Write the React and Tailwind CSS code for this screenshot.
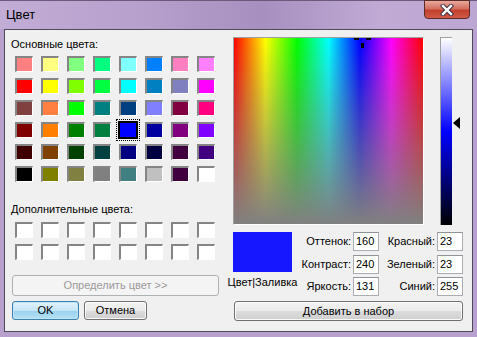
import React from "react";

const basic = [
  ["#FF8080", "#FFFF80", "#80FF80", "#00FF80", "#80FFFF", "#0080FF", "#FF80C0", "#FF80FF"],
  ["#FF0000", "#FFFF00", "#80FF00", "#00FF40", "#00FFFF", "#0080C0", "#8080C0", "#FF00FF"],
  ["#804040", "#FF8040", "#00FF00", "#008080", "#004080", "#8080FF", "#800040", "#FF0080"],
  ["#800000", "#FF8000", "#008000", "#008040", "#0000FF", "#0000A0", "#800080", "#8000FF"],
  ["#400000", "#804000", "#004000", "#004040", "#000080", "#000040", "#400040", "#400080"],
  ["#000000", "#808000", "#808040", "#808080", "#408080", "#C0C0C0", "#400040", "#FFFFFF"],
];

function Swatch({ color, selected }) {
  if (selected) {
    return (
      <div
        className="w-[18px] h-[16px] border border-black ring-1 ring-black outline-1 outline-dotted outline-black outline-offset-[2px]"
        style={{ backgroundColor: color }}
      />
    );
  }
  return (
    <div
      className="w-[18px] h-[16px] border-t-2 border-l-2 border-r border-b border-t-[#858585] border-l-[#858585] border-r-white border-b-white"
      style={{ backgroundColor: color }}
    />
  );
}

function Field({ label, value, labelW }) {
  return (
    <div className="flex items-center h-[19px]">
      <div className="text-right pr-[2px]" style={{ width: labelW }}>{label}</div>
      <div className="w-[26px] h-[19px] bg-white border border-[#abadb3] border-t-[#8e9299] pl-[2px] leading-[17px]">
        {value}
      </div>
    </div>
  );
}

export default function App() {
  return (
    <div className="w-[477px] h-[337px] overflow-hidden bg-[#b9a1cf] text-[11px] text-black font-['Liberation_Sans',Arial,sans-serif]">
      {/* Title bar */}
      <div className="h-[29px] flex items-start bg-[linear-gradient(90deg,#c2add6,#b7a0cc_30%,#a78fbf_55%,#c1abd5_80%,#bca6d2)] border-t border-[#6b5a7c]">
        <div className="pl-[6px] pt-[6px] text-[13px] leading-[15px]">Цвет</div>
        <div className="ml-auto mr-[7px] w-[46px] h-[19px] -mt-px rounded-b-[4px] border border-[#5b2b2b] bg-[linear-gradient(180deg,#e9a99c,#d4705f_45%,#c3402f_55%,#cf5a45)] flex items-center justify-center">
          <svg width="14" height="12" viewBox="0 0 14 12">
            <path d="M3 2 L11 10 M11 2 L3 10" stroke="#3b3048" strokeWidth="4.4" strokeLinecap="square" />
            <path d="M3 2 L11 10 M11 2 L3 10" stroke="#ffffff" strokeWidth="2.4" strokeLinecap="square" />
          </svg>
        </div>
      </div>

      {/* Client area */}
      <div className="mx-[4px] h-[303px] border border-[#4f4a5a] bg-[#f0f0f0] flex">
        {/* Left column */}
        <div className="w-[228px] flex flex-col">
          <div className="ml-[6px] mt-[8px] leading-[13px]">Основные цвета:</div>
          <div className="ml-[10px] mt-[5px] grid grid-cols-[repeat(8,18px)] gap-x-[8px] gap-y-[6px]">
            {basic.map((row, r) =>
              row.map((c, i) => <Swatch key={r + "-" + i} color={c} selected={r === 3 && i === 4} />)
            )}
          </div>
          <div className="ml-[6px] mt-[21px] leading-[13px]">Дополнительные цвета:</div>
          <div className="ml-[10px] mt-[6px] grid grid-cols-[repeat(8,18px)] gap-x-[8px] gap-y-[6px]">
            {Array.from({ length: 16 }).map((_, i) => (
              <Swatch key={i} color="#ffffff" />
            ))}
          </div>
          <div className="ml-[7px] mt-[15px] w-[207px] h-[21px] rounded-[3px] border border-[#adb2b5] bg-[#f4f4f4] text-[#9a9a9a] flex items-center justify-center">
            Определить цвет &gt;&gt;
          </div>
          <div className="ml-[7px] mt-[5px] flex gap-[5px]">
            <div className="w-[67px] h-[19px] rounded-[3px] border border-[#3c7fb1] bg-[linear-gradient(180deg,#e5f4fc,#c4e5f6_50%,#98d1ef_51%,#b6e0f5)] shadow-[inset_0_0_0_1px_#bfe6f9] flex items-center justify-center">
              OK
            </div>
            <div className="w-[63px] h-[19px] rounded-[3px] border border-[#707070] bg-[linear-gradient(180deg,#f2f2f2,#ebebeb_50%,#dddddd_51%,#cfcfcf)] shadow-[inset_0_0_0_1px_#fbfbfb] flex items-center justify-center">
              Отмена
            </div>
          </div>
        </div>

        {/* Right column */}
        <div className="flex flex-col pt-[7px]">
          <div className="flex items-start">
            <div className="relative w-[191px] h-[188px] border-t border-l border-[#a0a0a0] border-r border-b border-r-white border-b-white bg-[linear-gradient(90deg,#ff0000,#ffff00,#00ff00,#00ffff,#0000ff,#ff00ff,#ff0000)]">
              <div className="w-full h-full bg-[linear-gradient(180deg,rgba(128,128,128,0),#808080)]" />
              {/* crosshair */}
              <div className="absolute top-0 left-[120px] w-[5px] h-[2px] bg-black" />
              <div className="absolute top-0 left-[132px] w-[5px] h-[2px] bg-black" />
              <div className="absolute top-[5px] left-[127px] w-[3px] h-[5px] bg-black" />
            </div>
            <div className="ml-[16px] w-[12px] h-[188px] border-t border-l border-[#a0a0a0] bg-[linear-gradient(180deg,#ffffff,#0000ff_50%,#000000)]" />
            <svg className="mt-[80px] ml-px" width="7" height="12" viewBox="0 0 7 12">
              <polygon points="0,6 7,0 7,12" fill="#000" />
            </svg>
          </div>

          <div className="flex mt-[7px]">
            <div className="-ml-[5px] w-[69px] flex flex-col items-center">
              <div className="w-[59px] h-[40px] bg-[#1717ff]" />
              <div className="mt-[4px] leading-[13px] whitespace-nowrap">Цвет|Заливка</div>
            </div>
            <div className="flex flex-col gap-y-[3.5px]">
              <div className="flex">
                <Field label="Оттенок:" value="160" labelW={56} />
                <Field label="Красный:" value="23" labelW={58} />
              </div>
              <div className="flex">
                <Field label="Контраст:" value="240" labelW={56} />
                <Field label="Зеленый:" value="23" labelW={58} />
              </div>
              <div className="flex">
                <Field label="Яркость:" value="131" labelW={56} />
                <Field label="Синий:" value="255" labelW={58} />
              </div>
            </div>
          </div>

          <div className="ml-px mt-[5px] w-[229px] h-[20px] rounded-[3px] border border-[#707070] bg-[linear-gradient(180deg,#f2f2f2,#ebebeb_50%,#dddddd_51%,#cfcfcf)] shadow-[inset_0_0_0_1px_#fbfbfb] flex items-center justify-center">
            Добавить в набор
          </div>
        </div>
      </div>
    </div>
  );
}
